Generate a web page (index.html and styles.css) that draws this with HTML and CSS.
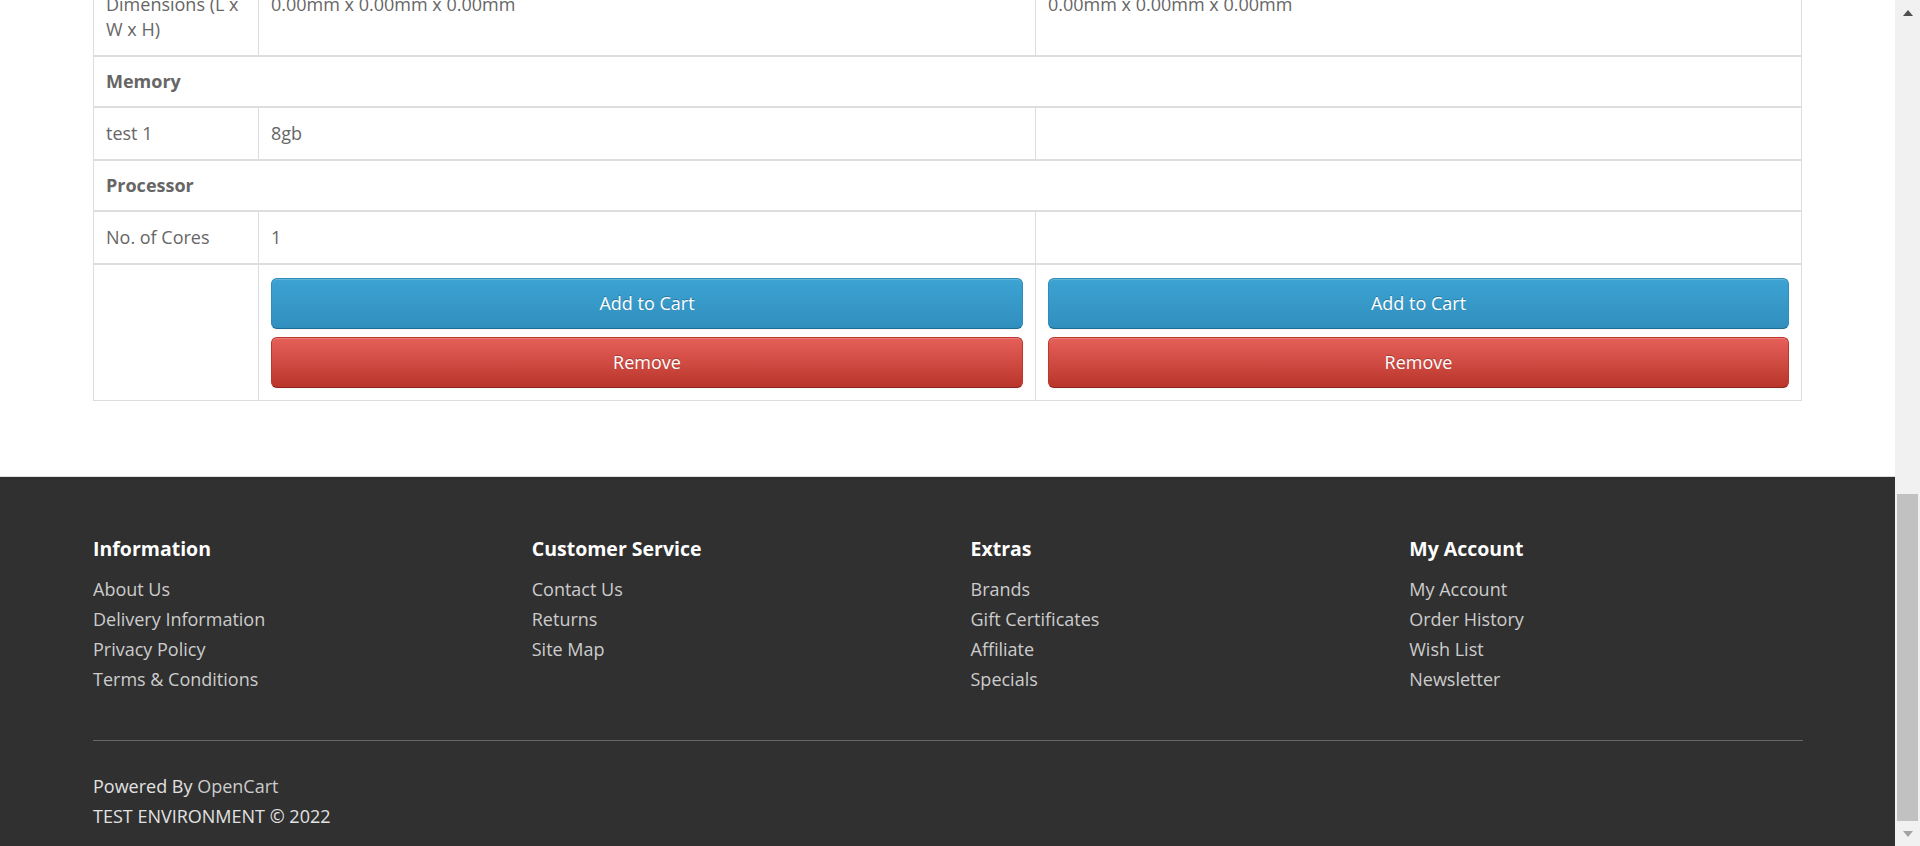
FILE: index.html
```html
<!DOCTYPE html>
<html lang="en">
<head>
<meta charset="utf-8">
<title>Product Comparison</title>
<link rel="stylesheet" href="styles.css">
</head>
<body>
<div class="window">
  <div class="viewport">
    <main class="container">
      <table class="compare-table">
        <tbody>
          <tr class="data">
            <td class="c-label">Dimensions (L x W x H)</td>
            <td class="c-prod1">0.00mm x 0.00mm x 0.00mm</td>
            <td class="c-prod2">0.00mm x 0.00mm x 0.00mm</td>
          </tr>
        </tbody>
        <tbody>
          <tr class="group">
            <td colspan="3"><strong>Memory</strong></td>
          </tr>
        </tbody>
        <tbody>
          <tr class="data">
            <td>test 1</td>
            <td>8gb</td>
            <td></td>
          </tr>
        </tbody>
        <tbody>
          <tr class="group">
            <td colspan="3"><strong>Processor</strong></td>
          </tr>
        </tbody>
        <tbody>
          <tr class="data">
            <td>No. of Cores</td>
            <td>1</td>
            <td></td>
          </tr>
        </tbody>
        <tbody>
          <tr class="actions">
            <td></td>
            <td>
              <button type="button" class="btn btn-primary">Add to Cart</button>
              <a href="#" class="btn btn-danger">Remove</a>
            </td>
            <td>
              <button type="button" class="btn btn-primary">Add to Cart</button>
              <a href="#" class="btn btn-danger">Remove</a>
            </td>
          </tr>
        </tbody>
      </table>
    </main>
    <footer class="footer">
      <div class="container">
        <div class="footer-cols">
          <div class="footer-col">
            <h5>Information</h5>
            <ul>
              <li><a href="#">About Us</a></li>
              <li><a href="#">Delivery Information</a></li>
              <li><a href="#">Privacy Policy</a></li>
              <li><a href="#">Terms &amp; Conditions</a></li>
            </ul>
          </div>
          <div class="footer-col">
            <h5>Customer Service</h5>
            <ul>
              <li><a href="#">Contact Us</a></li>
              <li><a href="#">Returns</a></li>
              <li><a href="#">Site Map</a></li>
            </ul>
          </div>
          <div class="footer-col">
            <h5>Extras</h5>
            <ul>
              <li><a href="#">Brands</a></li>
              <li><a href="#">Gift Certificates</a></li>
              <li><a href="#">Affiliate</a></li>
              <li><a href="#">Specials</a></li>
            </ul>
          </div>
          <div class="footer-col">
            <h5>My Account</h5>
            <ul>
              <li><a href="#">My Account</a></li>
              <li><a href="#">Order History</a></li>
              <li><a href="#">Wish List</a></li>
              <li><a href="#">Newsletter</a></li>
            </ul>
          </div>
        </div>
        <hr>
        <p>Powered By <a href="#">OpenCart</a><br>TEST ENVIRONMENT &copy; 2022</p>
      </div>
    </footer>
  </div>
  <div class="scrollbar" aria-hidden="true">
    <div class="sb-btn">
      <svg width="10" height="6" viewBox="0 0 10 6"><polygon points="5,0 10,6 0,6" fill="#505050"/></svg>
    </div>
    <div class="sb-track"><div class="sb-thumb"></div></div>
    <div class="sb-btn">
      <svg width="10" height="6" viewBox="0 0 10 6"><polygon points="0,0 10,0 5,6" fill="#a3a3a3"/></svg>
    </div>
  </div>
</div>
</body>
</html>
```

FILE: styles.css
```css
html, body {
  margin: 0;
  padding: 0;
  height: 846px;
  overflow: hidden;
}

body {
  font-family: "Open Sans", "Liberation Sans", sans-serif;
  font-size: 18px;
  line-height: 25px;
  color: #666666;
  background: #ffffff;
}

.window {
  display: flex;
  height: 846px;
}

.viewport {
  flex: 1;
  height: 846px;
  overflow: hidden;
  display: flex;
  flex-direction: column;
  justify-content: flex-end;
}

.container {
  width: 1755px;
  box-sizing: border-box;
  margin: 0 auto;
  padding: 0 22px 0 23px;
  flex: none;
}

/* comparison table */
.compare-table {
  width: 1709px;
  table-layout: fixed;
  border-collapse: separate;
  border-spacing: 0;
  border-left: 1px solid #dddddd;
  margin-bottom: 75px;
}

.compare-table td {
  box-sizing: border-box;
  border-top: 2px solid #dddddd;
  border-right: 1px solid #dddddd;
  padding: 13px 12px;
  line-height: 25px;
  vertical-align: top;
  text-align: left;
}

.compare-table .c-label { width: 165px; }
.compare-table .c-prod1 { width: 777px; }
.compare-table .c-prod2 { width: 766px; }

.compare-table .group td {
  padding-top: 12px;
  padding-bottom: 12px;
}

.compare-table .group strong {
  font-weight: 700;
}

.compare-table .actions td {
  border-bottom: 1px solid #dddddd;
  padding: 13px 12px 12px;
}

.btn {
  display: block;
  width: 100%;
  box-sizing: border-box;
  margin: 0;
  padding: 12px 18px;
  font-family: "Open Sans", "Liberation Sans", sans-serif;
  font-size: 18px;
  line-height: 25px;
  color: #ffffff;
  text-align: center;
  text-decoration: none;
  border: 1px solid;
  border-radius: 6px;
  text-shadow: 0 -1px 0 rgba(0, 0, 0, 0.25);
  box-shadow: inset 0 1px 0 rgba(255, 255, 255, 0.2), 0 1px 2px rgba(0, 0, 0, 0.05);
  cursor: pointer;
  -webkit-appearance: none;
  appearance: none;
}

.btn + .btn {
  margin-top: 8px;
}

.btn-primary {
  background-color: #3599c9;
  background-image: linear-gradient(to bottom, #3ca3d3, #318fbe);
  border-color: #2f8dbb #2f8dbb #1d6c93;
}

.btn-danger {
  background-color: #d04a42;
  background-image: linear-gradient(to bottom, #e6605a, #b9352a);
  border-color: #bd372d #bd372d #8c2520;
}

/* footer */
.footer {
  flex: none;
  background-color: #303030;
  border-top: 1px solid #dddddd;
  padding-top: 45px;
  color: #e2e2e2;
}

.footer-cols {
  display: grid;
  grid-template-columns: 438.75px 438.75px 438.75px 1fr;
}

.footer h5 {
  margin: 16px 0 14px;
  font-size: 19.5px;
  line-height: 22px;
  font-weight: 700;
  color: #ffffff;
}

.footer ul {
  list-style: none;
  margin: 0 0 15px;
  padding: 0;
}

.footer li {
  line-height: 30px;
}

.footer a {
  color: #cccccc;
  text-decoration: none;
}

.footer hr {
  height: 0;
  border: 0;
  border-bottom: 1px solid #666666;
  margin: 31px 0 30px;
}

.footer p {
  margin: 0 0 15px;
  line-height: 30px;
}

/* window scrollbar */
.scrollbar {
  flex: none;
  width: 25px;
  height: 846px;
  background: #f1f1f1;
  display: flex;
  flex-direction: column;
}

.sb-btn {
  flex: none;
  height: 25px;
  display: flex;
  align-items: center;
  justify-content: center;
}

.sb-track {
  flex: 1;
  display: flex;
  flex-direction: column;
  justify-content: flex-end;
  padding: 0 2px;
}

.sb-thumb {
  height: 327px;
  background: #c1c1c1;
}
```
